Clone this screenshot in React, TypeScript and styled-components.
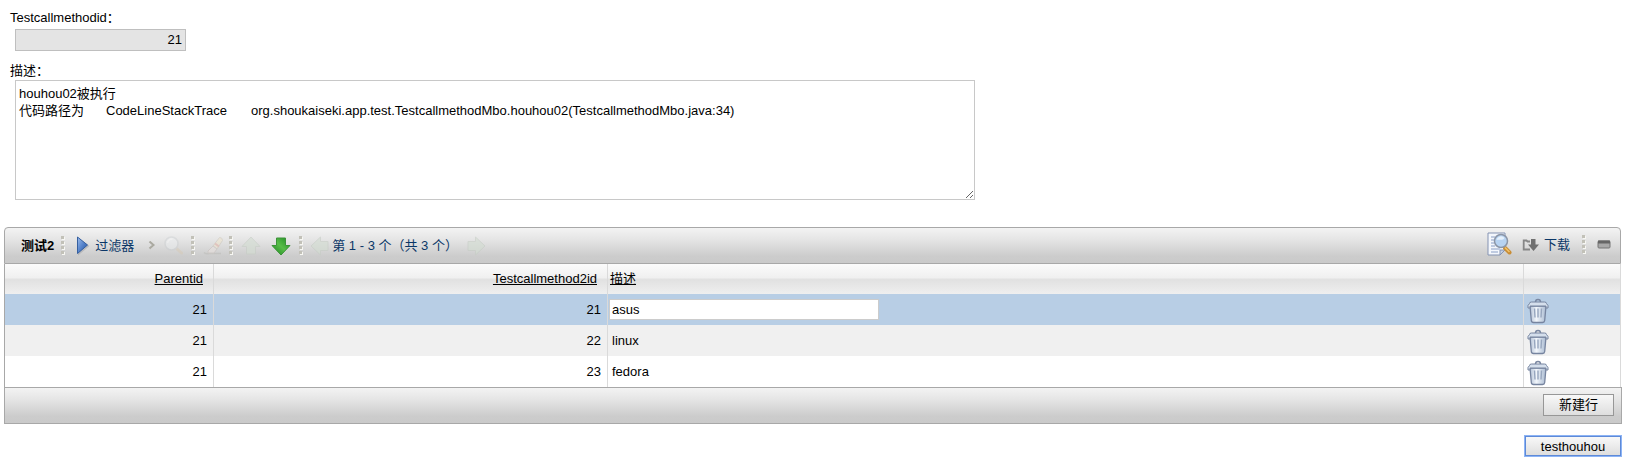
import React from "react";
import styled, { createGlobalStyle, css } from "styled-components";

const GlobalStyle = createGlobalStyle`
  *, *::before, *::after { box-sizing: border-box; }
  body {
    margin: 0;
    background: #fff;
    color: #000;
    font: 13px/17px "Liberation Sans", "Noto Sans CJK SC", sans-serif;
  }
  button, input, textarea { font: inherit; color: inherit; }
`;

const Page = styled.main`
  padding: 9px 6px 12px 4px;
`;

const Field = styled.div<{ $gap: number }>`
  display: flex;
  flex-direction: column;
  align-items: flex-start;
  padding-left: 6px;
  margin-bottom: ${(p) => p.$gap}px;
`;

const Label = styled.label<{ $gap: number }>`
  height: 18px;
  line-height: 18px;
  margin-bottom: ${(p) => p.$gap}px;
`;

const ReadOnlyInput = styled.input`
  width: 171px;
  height: 22px;
  margin-left: 5px;
  padding: 0 3px 2px;
  border: 1px solid #bfbfbf;
  background: #e4e4e4;
  text-align: right;
`;

const TextArea = styled.textarea`
  display: block;
  width: 960px;
  max-width: 100%;
  height: 120px;
  margin-left: 5px;
  padding: 4px 3px;
  border: 1px solid #c8c8c8;
  tab-size: 29px;
  line-height: 17px;
`;

const bar = css`
  display: flex;
  align-items: center;
  border: 1px solid #a8a8a8;
  background: linear-gradient(#f3f3f3, #e4e4e4 35%, #cccccc 80%, #cacaca);
`;

const Toolbar = styled.div`
  ${bar}
  height: 37px;
  margin-right: 1px;
  padding: 0 9px 0 16px;
  border-radius: 4px 4px 0 0;
  color: #0b3767;
`;

const Title = styled.h2`
  margin: 0 7px 0 0;
  color: #000;
  font-size: 13px;
  line-height: 17px;
`;

const ToolButton = styled.button<{ $gap?: number }>`
  display: flex;
  align-items: center;
  gap: 5px;
  margin: 0 ${(p) => p.$gap ?? 0}px 0 0;
  padding: 0;
  border: 0;
  background: none;
`;

const ToolGroup = styled.div`
  display: flex;
  align-items: center;
  padding-bottom: 2px;
  margin-left: auto;
`;

const DotColumn = styled.svg<{ $gap: number }>`
  display: block;
  flex: none;
  margin-right: ${(p) => p.$gap}px;
`;

const Dots = ({ gap }: { gap: number }) => (
  <DotColumn $gap={gap} width="4" height="20" viewBox="0 0 4 20">
    {[0, 5, 10, 15].map((y) => (
      <g key={y}>
        <rect x="1" y={y + 1} width="3" height="3" fill="#f7f7f3" />
        <rect x="0" y={y} width="3" height="3" fill="#c2c1b8" />
      </g>
    ))}
  </DotColumn>
);

const Status = styled.span`
  margin: 0 8px 0 2px;
  white-space: pre;
`;

const Icon = styled.svg`
  display: block;
  flex: none;
`;

const Table = styled.table`
  width: calc(100% - 1px);
  border-collapse: separate;
  border-spacing: 0;
  border-left: 1px solid #a8a8a8;
  table-layout: fixed;
`;

const Col = styled.col<{ $width?: string }>`
  width: ${(p) => p.$width ?? "auto"};
`;

const HeadCell = styled.th<{ $right?: boolean }>`
  height: 30px;
  padding: 0 ${(p) => (p.$right ? 10 : 2)}px 2px 2px;
  border-right: 1px solid #dadada;
  background: linear-gradient(#fbfbfb, #f0f0f0 45%, #e1e1e1 52%, #efefef);
  font-weight: normal;
  text-align: ${(p) => (p.$right ? "right" : "left")};
`;

const SortLink = styled.a`
  color: #000;
  text-decoration: underline;
`;

const Row = styled.tr<{ $tone: string }>`
  background: ${(p) => p.$tone};
`;

const Cell = styled.td<{ $right?: boolean }>`
  height: 31px;
  padding: 0 ${(p) => (p.$right ? 6 : 2)}px 0 ${(p) => (p.$right ? 2 : 4)}px;
  border-right: 1px solid #dadada;
  text-align: ${(p) => (p.$right ? "right" : "left")};
`;

const EditCell = styled(Cell)`
  padding-left: 1px;
`;

const IconCell = styled(Cell)`
  padding: 2px 0 0 3px;
`;

const CellInput = styled.input`
  display: block;
  width: 270px;
  height: 21px;
  padding: 0 2px;
  border: 1px solid #ccc;
  background: #fff;
`;

const Footer = styled.div`
  ${bar}
  height: 37px;
  padding: 0 7px 2px;
  justify-content: flex-end;
`;

const PushButton = styled.button<{ $focused?: boolean }>`
  min-width: ${(p) => (p.$focused ? 96 : 71)}px;
  height: ${(p) => (p.$focused ? 20 : 22)}px;
  padding: 0 12px;
  border: 1px solid ${(p) => (p.$focused ? "#5e8ad8" : "#979797")};
  box-shadow: ${(p) => (p.$focused ? "0 0 0 1px #8db4f5" : "none")};
  background: linear-gradient(#f8f8f8, #dedede);
  line-height: 17px;
`;

const Actions = styled.div`
  display: flex;
  justify-content: flex-end;
  padding: 12px 1px 0 0;
`;

const PlayIcon = () => (
  <Icon width="14" height="20" viewBox="0 0 14 20">
    <defs>
      <linearGradient id="play" x1="0" y1="0" x2="1" y2="1">
        <stop offset="0" stopColor="#9dbdec" />
        <stop offset=".5" stopColor="#5583cb" />
        <stop offset="1" stopColor="#1f4f9e" />
      </linearGradient>
    </defs>
    <path d="M2 2v17.500L13.500 10z" fill="#8f9296" opacity=".4" />
    <path d="M1.500 1v16.500L11.500 9z" fill="url(#play)" stroke="#355f9f" />
  </Icon>
);

const ChevronIcon = () => (
  <Icon width="8" height="10" viewBox="0 0 8 10">
    <path d="M1.500 .5l4 3.500-4 3.500" fill="none" stroke="#aaa9a0" strokeWidth="2" />
  </Icon>
);

const SearchIcon = () => (
  <Icon width="20" height="20" viewBox="0 0 20 20" opacity=".4">
    <path d="M12.500 12.500l5 4.500" stroke="#d8c8ae" strokeWidth="3" strokeLinecap="round" />
    <circle cx="7.500" cy="7.500" r="6.500" fill="#eff2f4" stroke="#c8cccf" strokeWidth="1.500" />
    <path d="M3.500 7q1-4 5-4" fill="none" stroke="#fff" strokeWidth="1.500" />
  </Icon>
);

const EraserIcon = () => (
  <Icon width="22" height="20" viewBox="0 0 22 20" opacity=".55">
    <path d="M1 16.500q2 2 5 1h12" fill="none" stroke="#bcbcb8" strokeWidth="1.500" />
    <path d="M10 10L16.500 1.500q3 0 3 3L14 13z" fill="#efe4cc" stroke="#cdc8bb" />
    <path d="M10 10l4 3-3 4H5v-2z" fill="#e9e2df" stroke="#c9c0bc" />
    <path d="M12 7.500l4 3" stroke="#e3aea4" strokeWidth="2" />
  </Icon>
);

const arrowTurn = { up: 0, right: 90, down: 180, left: 270 };

const ArrowIcon = ({ to, active }: { to: keyof typeof arrowTurn; active?: boolean }) => (
  <Icon width="20" height="20" viewBox="0 0 20 20">
    <defs>
      <linearGradient id="green" x1="0" y1="1" x2="1" y2="0">
        <stop offset="0" stopColor="#1d8a22" />
        <stop offset=".5" stopColor="#58bd48" />
        <stop offset="1" stopColor="#15801c" />
      </linearGradient>
    </defs>
    <g transform={`rotate(${arrowTurn[to]} 10 10)`}>
      <path
        d="M10 1l9 9.500h-4.500v7.500h-9v-7.500h-4.500z"
        fill={active ? "url(#green)" : "#d3ddd2"}
        stroke={active ? "#3c9239" : "#c6cdc5"}
        strokeLinejoin="round"
        opacity={active ? 1 : 0.6}
      />
    </g>
  </Icon>
);

const PreviewIcon = () => (
  <Icon width="25" height="25" viewBox="0 0 25 25">
    <path d="M1 1h17v17l-5 5H1z" fill="#f4f7fc" stroke="#8493b2" />
    <path d="M18 18h-5v5z" fill="#c3cfe2" stroke="#8493b2" />
    <path d="M4 5h4M4 8h3M4 11h3M4 14h4M4 17h9M4 20h7" stroke="#8a9fc6" />
    <path d="M18 16l4.500 4.500" stroke="#c98d35" strokeWidth="4" strokeLinecap="round" />
    <path d="M18 15.500l4.500 4.500" stroke="#f1c36a" strokeWidth="1.500" />
    <circle cx="14" cy="9" r="6.500" fill="#b7d3f2" stroke="#8b95a6" strokeWidth="1.500" />
    <path d="M9.500 8a4.500 4.500 0 0 1 8-2c-2 3-5 1-8 2z" fill="#e6f1fc" />
  </Icon>
);

const DownloadIcon = () => (
  <Icon width="17" height="14" viewBox="0 0 17 14">
    <path d="M8 3.500H5.500L4.500 2.500H1.700v9H8" fill="none" stroke="#868686" strokeWidth="1.800" />
    <path d="M9 1h4.500v5.500H17l-5.500 6.500L6 6.500h3z" fill="#707070" />
  </Icon>
);

const MinimizeIcon = () => (
  <Icon width="14" height="10" viewBox="0 0 14 10">
    <rect x="1" y="1" width="12" height="7" rx="1" fill="#a8a8a8" stroke="#757575" />
    <path d="M1 2h12" stroke="#666" strokeWidth="3" />
  </Icon>
);

const TrashIcon = () => (
  <Icon width="22" height="26" viewBox="0 0 22 26">
    <defs>
      <linearGradient id="can" x1="0" x2="1">
        <stop offset="0" stopColor="#b4c2d6" />
        <stop offset=".4" stopColor="#f2f6fb" />
        <stop offset="1" stopColor="#a9bad1" />
      </linearGradient>
    </defs>
    <path d="M8.500 4c0-3.500 5-3.500 5 0" fill="none" stroke="#7b88a2" strokeWidth="1.500" />
    <path d="M3 8l1.300 14.500q.2 2 2.200 2h9q2 0 2.200-2L19 8z" fill="url(#can)" stroke="#76849f" strokeWidth="1.300" />
    <path d="M7.500 10.500l.5 9M11 10.500v9M14.500 10.500l-.5 9" stroke="#97a6be" strokeWidth="1.400" />
    <path d="M2.500 5.500q0-1.500 2-1.500h13q2 0 2 1.500l1.500 2v2.500h-2V8H3v2H1V7.500z" fill="#d5dfec" stroke="#76849f" />
  </Icon>
);

const rows = [
  { parent: 21, id: 21, text: "asus" },
  { parent: 21, id: 22, text: "linux" },
  { parent: 21, id: 23, text: "fedora" },
];

const tones = ["#b8cee5", "#f0f0f0", "#ffffff"];

const trace =
  "houhou02被执行\n代码路径为\tCodeLineStackTrace\torg.shoukaiseki.app.test.TestcallmethodMbo.houhou02(TestcallmethodMbo.java:34)";

export default function App() {
  return (
    <Page>
      <GlobalStyle />
      <Field $gap={11}>
        <Label htmlFor="method-id" $gap={2}>Testcallmethodid：</Label>
        <ReadOnlyInput id="method-id" readOnly value="21" />
      </Field>
      <Field $gap={27}>
        <Label htmlFor="description" $gap={0}>描述：</Label>
        <TextArea id="description" spellCheck={false} defaultValue={trace} />
      </Field>

      <section>
        <Toolbar>
          <Title>测试2</Title>
          <Dots gap={11} />
          <ToolButton $gap={14}><PlayIcon />过滤器</ToolButton>
          <ToolButton $gap={8} aria-label="展开"><ChevronIcon /></ToolButton>
          <ToolButton $gap={7} aria-label="搜索"><SearchIcon /></ToolButton>
          <Dots gap={8} />
          <ToolButton $gap={4} aria-label="清除"><EraserIcon /></ToolButton>
          <Dots gap={8} />
          <ToolButton $gap={10} aria-label="上一行"><ArrowIcon to="up" /></ToolButton>
          <ToolButton $gap={8} aria-label="下一行"><ArrowIcon to="down" active /></ToolButton>
          <Dots gap={7} />
          <ToolButton aria-label="上一页"><ArrowIcon to="left" /></ToolButton>
          <Status>第 1 - 3 个（共 3 个）</Status>
          <ToolButton aria-label="下一页"><ArrowIcon to="right" /></ToolButton>
          <ToolGroup>
            <ToolButton $gap={10} aria-label="预览"><PreviewIcon /></ToolButton>
            <ToolButton $gap={12}><DownloadIcon />下载</ToolButton>
            <Dots gap={11} />
            <ToolButton aria-label="最小化"><MinimizeIcon /></ToolButton>
          </ToolGroup>
        </Toolbar>
        <Table>
          <colgroup>
            <Col $width="209px" />
            <Col $width="394px" />
            <Col />
            <Col $width="97px" />
          </colgroup>
          <thead>
            <tr>
              <HeadCell $right><SortLink href="#parent">Parentid</SortLink></HeadCell>
              <HeadCell $right><SortLink href="#id">Testcallmethod2id</SortLink></HeadCell>
              <HeadCell><SortLink href="#text">描述</SortLink></HeadCell>
              <HeadCell />
            </tr>
          </thead>
          <tbody>
            {rows.map((row, i) => (
              <Row key={row.id} $tone={tones[i]}>
                <Cell $right>{row.parent}</Cell>
                <Cell $right>{row.id}</Cell>
                {i === 0 ? (
                  <EditCell><CellInput aria-label="描述" defaultValue={row.text} /></EditCell>
                ) : (
                  <Cell>{row.text}</Cell>
                )}
                <IconCell>
                  <ToolButton aria-label="删除"><TrashIcon /></ToolButton>
                </IconCell>
              </Row>
            ))}
          </tbody>
        </Table>
        <Footer>
          <PushButton>新建行</PushButton>
        </Footer>
      </section>
      <Actions>
        <PushButton $focused>testhouhou</PushButton>
      </Actions>
    </Page>
  );
}
